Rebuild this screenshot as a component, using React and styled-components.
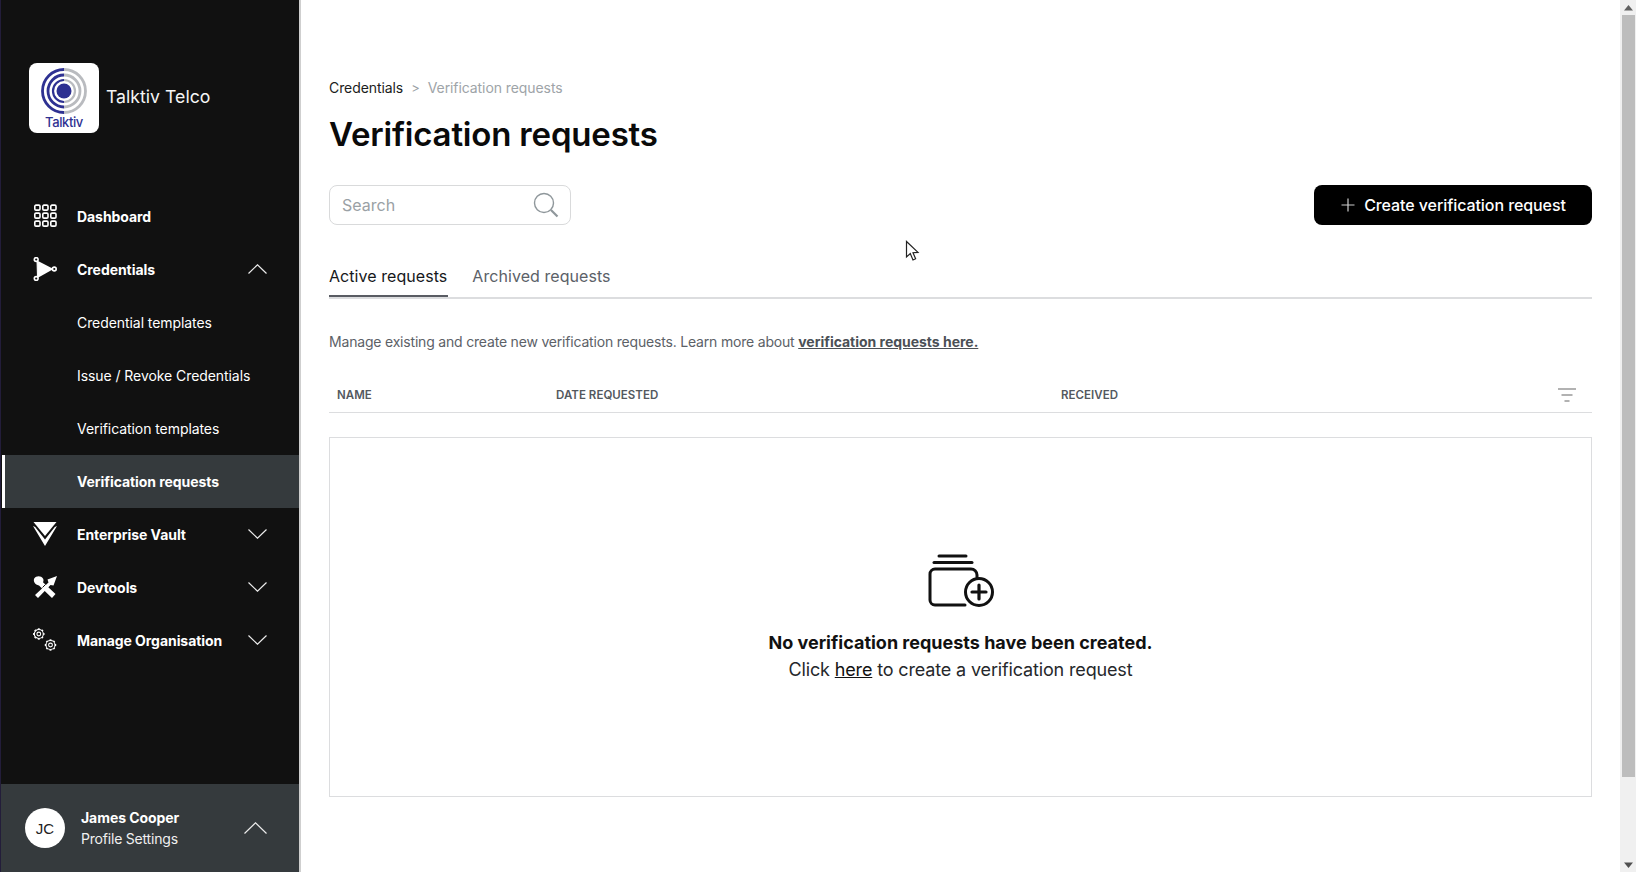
import React from "react";
import styled, { createGlobalStyle } from "styled-components";

const Global = createGlobalStyle`
  html, body { margin: 0; padding: 0; height: 100%; overflow: hidden; background: #fff; }
  body { font-family: Inter, "Liberation Sans", sans-serif; }
`;

const Page = styled.div`
  display: flex;
  width: 1636px;
  height: 872px;
  overflow: hidden;
  position: relative;
`;
const Sidebar = styled.aside`
  width: 301px;
  height: 872px;
  flex: none;
  box-sizing: border-box;
  background: #111111;
  border-left: 1px solid #231d3a;
  border-right: 2px solid #cfcfcf;
  display: flex;
  flex-direction: column;
  color: #fff;
`;
const Brand = styled.div`
  display: flex;
  align-items: center;
  gap: 7px;
  padding: 63px 0 0 28px;
  height: 133px;
  box-sizing: border-box;
  margin-bottom: 57px;
`;
const LogoBox = styled.div`
  width: 70px;
  height: 70px;
  border-radius: 8px;
  background: #fff;
  display: flex;
  flex-direction: column;
  align-items: center;
  padding-top: 5px;
  box-sizing: border-box;
`;
const LogoText = styled.span`
  color: #2e3192;
  font-size: 13px;
  font-weight: 500;
  line-height: 12px;
  letter-spacing: -0.4px;
  margin-top: 2px;
`;
const BrandName = styled.span`
  font-size: 17.7px;
  font-weight: 400;
  color: #f5f5f5;
  margin-bottom: 3px;
`;
const Nav = styled.nav`
  display: flex;
  flex-direction: column;
  flex: 1;
`;
const Row = styled.div`
  height: 53px;
  display: flex;
  align-items: center;
  box-sizing: border-box;
  padding-bottom: 1px;
  padding-left: ${(p) => (p.$sub ? "76px" : "32px")};
  background: ${(p) => (p.$active ? "#353a3d" : "transparent")};
  border-left: ${(p) => (p.$active ? "3px solid #fff" : "none")};
  margin-left: ${(p) => (p.$active ? "1px" : "0")};
  ${(p) => p.$active && "padding-left: 72px;"}
`;
const IconSlot = styled.span`
  width: 24px;
  height: 24px;
  display: flex;
  margin-right: 20px;
  flex: none;
`;
const NavLabel = styled.span`
  font-size: 14px;
  font-weight: ${(p) => (p.$bold ? 700 : 400)};
  letter-spacing: ${(p) => (p.$bold ? "-0.06px" : "-0.07px")};
  flex: 1;
  white-space: nowrap;
`;
const Caret = styled.svg`
  flex: none;
  margin-right: ${(p) => p.$right}px;
  fill: none;
  stroke: #ececec;
  stroke-width: 1.2;
`;
const Footer = styled.div`
  height: 88px;
  background: #353a3d;
  display: flex;
  align-items: center;
  padding-left: 24px;
  flex: none;
`;
const Avatar = styled.div`
  width: 40px;
  height: 40px;
  border-radius: 50%;
  background: #fff;
  color: #222;
  font-size: 15px;
  font-family: "Liberation Sans", sans-serif;
  display: flex;
  align-items: center;
  justify-content: center;
  margin-right: 16px;
  flex: none;
`;
const Who = styled.div`
  flex: 1;
  display: flex;
  flex-direction: column;
  gap: 3px;
  padding-top: 1px;
`;
const WhoName = styled.span`
  font-size: 14px;
  font-weight: 700;
  line-height: 18px;
  letter-spacing: -0.06px;
`;
const WhoSub = styled.span`
  font-size: 14px;
  font-weight: 400;
  line-height: 18px;
  letter-spacing: -0.2px;
  color: #f0f0f0;
`;
const Main = styled.main`
  flex: 1;
  min-width: 0;
  padding: 77px 28px 0 28px;
  box-sizing: border-box;
  color: #111;
`;
const Crumbs = styled.div`
  display: flex;
  align-items: center;
  font-size: 14px;
  line-height: 22px;
  letter-spacing: -0.08px;
  height: 22px;
`;
const CrumbLink = styled.span`
  color: #1b1d20;
`;
const CrumbSep = styled.span`
  color: #9aa0a5;
  margin: 0 8px;
  font-size: 13px;
`;
const CrumbCur = styled.span`
  color: #9ea4a8;
`;
const Title = styled.h1`
  margin: 13px 0 0;
  font-size: 33px;
  line-height: 44px;
  font-weight: 600;
  letter-spacing: -0.18px;
  color: #0a0a0a;
`;
const Toolbar = styled.div`
  display: flex;
  justify-content: space-between;
  align-items: center;
  margin-top: 29px;
`;
const SearchBox = styled.div`
  width: 242px;
  height: 40px;
  box-sizing: border-box;
  border: 1px solid #d9dadb;
  border-radius: 8px;
  display: flex;
  align-items: center;
  justify-content: space-between;
  padding: 0 11px 0 12px;
  color: #9aa1a5;
  font-size: 16px;
`;
const CreateBtn = styled.button`
  width: 278px;
  height: 40px;
  background: #000;
  color: #fff;
  border: 0;
  border-radius: 8px;
  display: flex;
  align-items: center;
  justify-content: center;
  gap: 8px;
  font-family: inherit;
  font-size: 16px;
  font-weight: 500;
  letter-spacing: -0.08px;
`;
const Tabs = styled.div`
  display: flex;
  margin-top: 29px;
  height: 43px;
  border-bottom: 2px solid #dcdddf;
  gap: 24px;
`;
const Tab = styled.div`
  height: 43px;
  padding-top: 11px;
  box-sizing: border-box;
  font-size: 16px;
  line-height: 22px;
  color: ${(p) => (p.$active ? "#16181b" : "#5b6168")};
  border-bottom: 2px solid ${(p) => (p.$active ? "#595c63" : "transparent")};
  letter-spacing: 0.06px;
  padding-right: 1px;
`;
const Intro = styled.p`
  margin: 33px 0 0;
  font-size: 14px;
  line-height: 20px;
  color: #5c6167;
  letter-spacing: -0.19px;
`;
const IntroLink = styled.a`
  color: #4b5056;
  font-weight: 700;
  letter-spacing: -0.02px;
  text-decoration: underline;
`;
const TableHead = styled.div`
  display: grid;
  grid-template-columns: 219px 505px 1fr auto;
  align-items: center;
  height: 36px;
  margin-top: 25px;
  padding: 0 16px 0 8px;
  border-bottom: 1px solid #dcdddf;
  box-sizing: border-box;
`;
const Th = styled.span`
  font-size: 11.5px;
  font-weight: 600;
  color: #53585e;
  letter-spacing: 0.04px;
`;
const EmptyCard = styled.section`
  margin-top: 24px;
  height: 360px;
  box-sizing: border-box;
  border: 1px solid #dcdddf;
  display: flex;
  flex-direction: column;
  align-items: center;
  padding-top: 116px;
`;
const EmptyTitle = styled.div`
  margin-top: 21px;
  font-size: 18px;
  line-height: 27px;
  font-weight: 700;
  letter-spacing: 0;
  color: #111;
`;
const EmptyText = styled.div`
  font-size: 18px;
  line-height: 27px;
  color: #26282b;
  letter-spacing: -0.15px;
`;
const EmptyLink = styled.a`
  color: #111;
  text-decoration: underline;
`;
const Cursor = styled.svg`
  position: absolute;
  left: 905px;
  top: 240px;
`;
const ScrollBar = styled.div`
  width: 16px;
  flex: none;
  height: 872px;
  background: #f0f0f0;
  display: flex;
  flex-direction: column;
  align-items: stretch;
`;
const ScrollArrow = styled.div`
  height: 15px;
  flex: none;
  display: flex;
  align-items: center;
  justify-content: center;
`;
const ScrollThumb = styled.div`
  height: 762px;
  margin: 0 1px 0 2px;
  background: #bdbdbd;
  flex: none;
`;
const ScrollRest = styled.div`
  flex: 1;
`;

const Dash = () => (
  <svg width="24" height="24" viewBox="0 0 24 24" fill="none" stroke="#fff" strokeWidth="1.6">
    {[2, 10, 18].flatMap((y) =>
      [2, 10, 18].map((x) => <rect key={x + "-" + y} x={x - 0.2} y={y - 0.9} width="5.2" height="5" rx="1.2" />)
    )}
  </svg>
);
const Cred = () => (
  <svg width="24" height="24" viewBox="0 0 24 24" fill="none">
    <path d="M4 3.5 L4.5 20.5" stroke="#fff" strokeWidth="1" />
    <path d="M4 3.5 L20.5 12 L4.5 21Z" fill="#fff" />
    <circle cx="3.2" cy="2.5" r="1.9" fill="#111" stroke="#fff" strokeWidth="1.6" />
    <circle cx="3.2" cy="21.5" r="1.9" fill="#111" stroke="#fff" strokeWidth="1.6" />
    <circle cx="21.3" cy="12" r="1.9" fill="#111" stroke="#fff" strokeWidth="1.6" />
  </svg>
);
const Vault = () => (
  <svg width="24" height="24" viewBox="0 0 24 24">
    <path d="M0.5 0 H23.5 L12 14Z" fill="#fff" />
    <path d="M0 4 L12 24 L24 4 L21.8 5 L12 17.5 L2.2 5Z" fill="#fff" />
  </svg>
);
const Tools = () => (
  <svg width="24" height="24" viewBox="0 0 24 24">
    <path d="M5 23 L2 20 L15.5 7.5 L14.5 4.5 L24 1 L20.5 10.5 L17.5 10Z" fill="#fff" />
    <path d="M6 10.5 C2 9.5 0 6.5 1.2 3.5 C3 0.5 8 0.2 10 3.5 C10.8 5 10.5 6.3 10 7.2 L22.5 19 L19 23Z" fill="#fff" />
    <path d="M9.5 12.5 L12.5 9.5" stroke="#111" strokeWidth="1" />
  </svg>
);
const Gear = ({ cx, cy, r }) => {
  const teeth = [0, 45, 90, 135, 180, 225, 270, 315];
  return (
    <g stroke="#fff" fill="none" strokeWidth="1.1">
      {teeth.map((a) => {
        const rad = (a * Math.PI) / 180;
        return (
          <line
            key={a}
            x1={cx + Math.cos(rad) * r}
            y1={cy + Math.sin(rad) * r}
            x2={cx + Math.cos(rad) * (r + 1.2)}
            y2={cy + Math.sin(rad) * (r + 1.2)}
            strokeWidth="1.9"
          />
        );
      })}
      <circle cx={cx} cy={cy} r={r} />
      <circle cx={cx} cy={cy} r={r * 0.42} />
    </g>
  );
};
const Gears = () => (
  <svg width="24" height="24" viewBox="0 0 24 24">
    <Gear cx={5.8} cy={6} r={4.5} />
    <Gear cx={17.5} cy={17} r={4.5} />
  </svg>
);

const items = [
  { label: "Dashboard", icon: <Dash />, bold: true },
  { label: "Credentials", icon: <Cred />, bold: true, caret: "up" },
  { label: "Credential templates", sub: true },
  { label: "Issue / Revoke Credentials", sub: true },
  { label: "Verification templates", sub: true },
  { label: "Verification requests", sub: true, bold: true, active: true },
  { label: "Enterprise Vault", icon: <Vault />, bold: true, caret: "down" },
  { label: "Devtools", icon: <Tools />, bold: true, caret: "down" },
  { label: "Manage Organisation", icon: <Gears />, bold: true, caret: "down" },
];

const Logo = () => (
  <svg width="46" height="46" viewBox="0 0 46 46" fill="none">
    <path d="M23 1.5 A21.5 21.5 0 0 1 23 44.5" stroke="#b9bbbf" strokeWidth="2.8" />
    <path d="M23 7 A16 16 0 0 1 23 39" stroke="#b9bbbf" strokeWidth="2.8" />
    <path d="M23 1.5 A21.5 21.5 0 0 0 23 44.5" stroke="#2e3192" strokeWidth="2.8" />
    <path d="M23 7 A16 16 0 0 0 23 39" stroke="#2e3192" strokeWidth="2.8" />
    <path d="M23 12 A11 11 0 0 0 23 34" stroke="#2e3192" strokeWidth="2.2" />
    <path d="M23 12 A11 11 0 0 1 23 34" stroke="#b9bbbf" strokeWidth="2.2" />
    <circle cx="23" cy="23" r="7.5" fill="#2e3192" />
  </svg>
);

const Stack = () => (
  <svg width="66" height="54" viewBox="0 0 66 54" fill="none" stroke="#111" strokeLinecap="round">
    <path d="M11 2 H38" strokeWidth="3" />
    <path d="M6 8.5 H44" strokeWidth="3" />
    <path d="M37 51 H7 A5 5 0 0 1 2 46 V20 A5 5 0 0 1 7 15 H43 A6 6 0 0 1 49 21 V23" strokeWidth="3" />
    <circle cx="51" cy="38" r="13.5" strokeWidth="3" />
    <path d="M51 31 V45 M44 38 H58" strokeWidth="3.2" />
  </svg>
);

const CaretUp = ({ w = 19, h = 10, right = 32 }) => (
  <Caret $right={right} width={w} height={h} viewBox={`0 0 ${w} ${h}`}>
    <path d={`M0.5 ${h - 0.5} L${w / 2} 0.8 L${w - 0.5} ${h - 0.5}`} />
  </Caret>
);
const CaretDown = ({ w = 19, h = 10, right = 32 }) => (
  <Caret $right={right} width={w} height={h} viewBox={`0 0 ${w} ${h}`}>
    <path d={`M0.5 0.5 L${w / 2} ${h - 0.8} L${w - 0.5} 0.5`} />
  </Caret>
);

export default function App() {
  return (
    <Page>
      <Global />
      <Sidebar>
        <Brand>
          <LogoBox>
            <Logo />
            <LogoText>Talktiv</LogoText>
          </LogoBox>
          <BrandName>Talktiv Telco</BrandName>
        </Brand>
        <Nav>
          {items.map((it) => (
            <Row key={it.label} $sub={it.sub} $active={it.active}>
              {it.icon && <IconSlot>{it.icon}</IconSlot>}
              <NavLabel $bold={it.bold}>{it.label}</NavLabel>
              {it.caret === "up" && <CaretUp />}
              {it.caret === "down" && <CaretDown />}
            </Row>
          ))}
        </Nav>
        <Footer>
          <Avatar>JC</Avatar>
          <Who>
            <WhoName>James Cooper</WhoName>
            <WhoSub>Profile Settings</WhoSub>
          </Who>
          <CaretUp w={23} h={12} right={32} />
        </Footer>
      </Sidebar>
      <Main>
        <Crumbs>
          <CrumbLink>Credentials</CrumbLink>
          <CrumbSep>&gt;</CrumbSep>
          <CrumbCur>Verification requests</CrumbCur>
        </Crumbs>
        <Title>Verification requests</Title>
        <Toolbar>
          <SearchBox>
            <span>Search</span>
            <svg width="26" height="26" viewBox="0 0 26 26" fill="none" stroke="#8f979b">
              <circle cx="11" cy="11" r="9.5" strokeWidth="1.4" />
              <path d="M18 18 L24.5 24.5" strokeWidth="2.2" />
            </svg>
          </SearchBox>
          <CreateBtn>
            <svg width="16" height="16" viewBox="0 0 16 16" stroke="#ccc" strokeWidth="1.2">
              <path d="M8 1.5 V14.5 M1.5 8 H14.5" />
            </svg>
            Create verification request
          </CreateBtn>
        </Toolbar>
        <Tabs>
          <Tab $active>Active requests</Tab>
          <Tab>Archived requests</Tab>
        </Tabs>
        <Intro>
          Manage existing and create new verification requests. Learn more about{" "}
          <IntroLink>verification requests here.</IntroLink>
        </Intro>
        <TableHead>
          <Th>NAME</Th>
          <Th>DATE REQUESTED</Th>
          <Th>RECEIVED</Th>
          <svg width="18" height="14" viewBox="0 0 18 14" stroke="#666" strokeWidth="1.2">
            <path d="M0 1 H18 M3.5 7 H14.5 M6.5 13 H11.5" />
          </svg>
        </TableHead>
        <EmptyCard>
          <Stack />
          <EmptyTitle>No verification requests have been created.</EmptyTitle>
          <EmptyText>
            Click <EmptyLink>here</EmptyLink> to create a verification request
          </EmptyText>
        </EmptyCard>
      </Main>
      <ScrollBar>
        <ScrollArrow>
          <svg width="9" height="6" viewBox="0 0 9 6"><path d="M4.5 0 L9 5.5 H0Z" fill="#606060" /></svg>
        </ScrollArrow>
        <ScrollThumb />
        <ScrollRest />
        <ScrollArrow>
          <svg width="9" height="6" viewBox="0 0 9 6"><path d="M4.5 6 L9 0.5 H0Z" fill="#505050" /></svg>
        </ScrollArrow>
      </ScrollBar>
      <Cursor width="16" height="22" viewBox="0 0 16 22">
        <path d="M1.5 1.5 V17 L5.3 13.6 L8 20 L10.6 18.8 L8 12.7 L13 12.4Z" fill="#fff" stroke="#222" strokeWidth="1.2" />
      </Cursor>
    </Page>
  );
}
